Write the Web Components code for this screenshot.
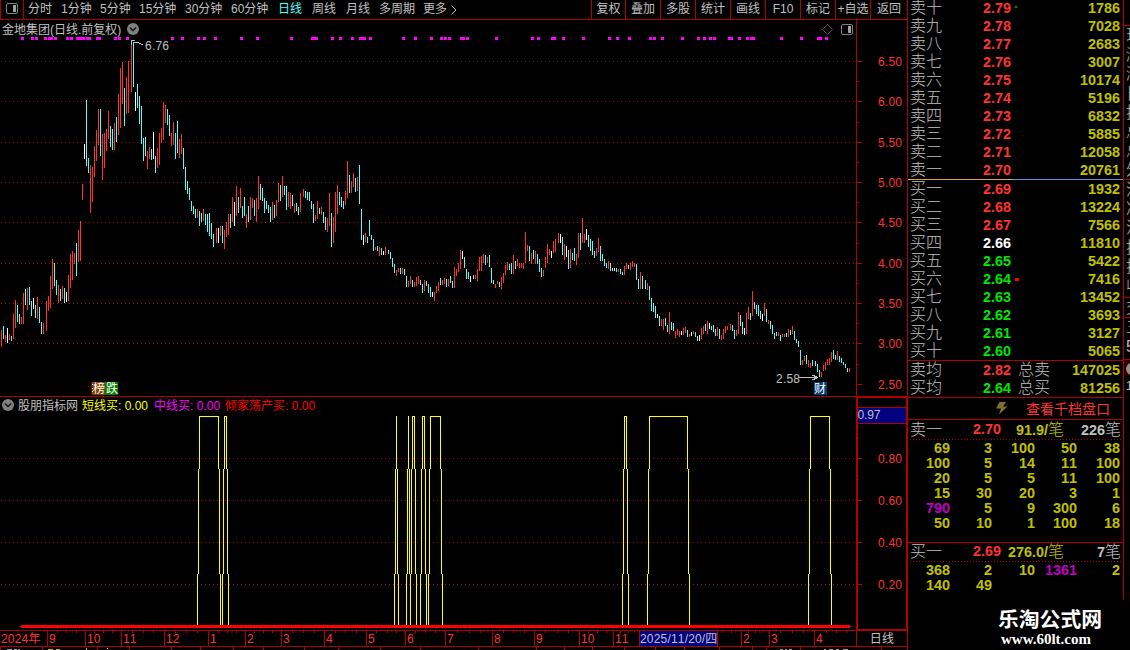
<!DOCTYPE html>
<html lang="zh-CN">
<head>
<meta charset="utf-8">
<title>金地集团 日线</title>
<style>
  :root {
    --line: #b00000;
    --grey: #c0c0c0;
    --up: #ff3232;
    --down: #54fcfc;
    --volume: #c0c000;
  }
  body {
    margin: 0;
    width: 1130px;
    height: 650px;
    overflow: hidden;
    background: #000;
    color: var(--grey);
    font: 12px/14px "Liberation Sans", "Noto Sans CJK SC", sans-serif;
    font-kerning: none;
  }
</style>
</head>
<body>
<trade-screen>
  <tool-bar slot="chart"></tool-bar>
  <price-chart slot="chart"></price-chart>
  <indicator-chart slot="chart">股朋指标网</indicator-chart>
  <time-axis slot="chart"></time-axis>
  <order-book slot="book"></order-book>
  <side-strip slot="side"></side-strip>
</trade-screen>

<script>
// shared helpers for the drawn parts
const rect = (x, y, w, h, fill) => `<rect x="${x}" y="${y}" width="${w}" height="${h}" fill="${fill}"/>`;
const LINE = '#b00000';

const gridRow = (y, width) =>
  `<line x1="1" x2="${width}" y1="${y + 0.5}" y2="${y + 0.5}" stroke="#980a0a" stroke-dasharray="1 3"/>`;

const chevronIcon = `
  <svg class="chevron" width="12" height="12" viewBox="0 0 12 12">
    <circle cx="6" cy="6" r="6" fill="#808080"/>
    <path d="M2.8 4.6 6 7.6 9.2 4.6" fill="none" stroke="#111" stroke-width="1.4"/>
  </svg>`;

const panelIcon = `
  <svg width="12" height="11" viewBox="0 0 12 11">
    <rect x=".5" y=".5" width="11" height="10" rx="1.5" fill="none" stroke="#808080"/>
    <rect x="7" y="2" width="3" height="7" fill="#a0a0a0"/>
  </svg>`;

class TradeScreen extends HTMLElement {
  constructor() {
    super();
    this.attachShadow({mode: 'open'}).innerHTML = `
      <style>
        :host { display: grid; grid-template-columns: 907px 217px 6px; height: 650px; }
        .charts { display: flex; flex-direction: column; overflow: hidden; }
        .book { border-left: 1px solid var(--line); overflow: hidden; }
        .side { overflow: hidden; }
      </style>
      <div class="charts"><slot name="chart"></slot></div>
      <div class="book"><slot name="book"></slot></div>
      <div class="side"><slot name="side"></slot></div>
    `;
  }
}

class ToolBar extends HTMLElement {
  constructor() {
    super();
    const periods = ['分时', '1分钟', '5分钟', '15分钟', '30分钟', '60分钟', '日线', '周线', '月线', '多周期', '更多'];
    const actions = ['复权', '叠加', '多股', '统计', '画线', 'F10', '标记', '+自选', '返回'];
    this.attachShadow({mode: 'open'}).innerHTML = `
      <style>
        :host { display: flex; height: 19px; line-height: 19px; border-bottom: 1px solid var(--line); white-space: nowrap; }
        .toggle { width: 22px; border: 1px solid var(--line); border-width: 0 1px; display: flex; align-items: flex-start; justify-content: center; padding-top: 3px; box-sizing: content-box; height: 16px; }
        .periods { display: grid; grid-template-columns: 33px 39px 39px 46px 46px 47px 34px 34px 33px 44px 38px; padding-left: 4px; flex: 1; }
        .active { color: var(--down); }
        .periods span:last-child { display: flex; align-items: center; gap: 4px; height: 19px; }
        .actions { display: grid; grid-template-columns: 34px repeat(7, 35px) 37px; width: 316px; }
        .actions span { border-left: 1px solid var(--line); text-align: center; height: 19px; }
      </style>
      <div class="toggle">${panelIcon}</div>
      <div class="periods">
        ${periods.map(p => `<span class="${p === '日线' ? 'active' : ''}">${p}${p === '更多'
          ? '<svg width="6" height="10" viewBox="0 0 6 10"><path d="M.5.5 5 5 .5 9.5" fill="none" stroke="#c0c0c0"/></svg>' : ''}</span>`).join('')}
      </div>
      <div class="actions">${actions.map(a => `<span>${a}</span>`).join('')}</div>
    `;
  }
}

// daily bars: [x of the first bar, bars 2px apart]; colour letter, high and low
const BARS = [
  [1, 'r330-347 c326-339 r335-342 w328-343 r334-340 c336-341 r314-339 r300-328 c305-322 c314-324 r317-324 r293-324 c289-305 r288-310 c287-305 c301-316 w298-309 c305-318 r297-319 c307-323 c322-334 r323-334'],
  [46, 'r301-331 r296-311 r276-308 r259-289 c263-286 c280-295 r285-303 c289-301 r286-299 c288-303 w292-302 r275-301 r254-288 r251-280 r253-264 c243-276 r230-262 r221-261 r184-200 w144-159 c100-166 c158-173 r165-213 r167-202 r146-177 r130-161 r109-145 c109-156 r134-180 r133-168 r129-151 r111-139 c126-147 c129-150 r123-150 c117-142 r94-135 r68-128 r62-104 c88-126 r77-114 r61-113'],
  [131, 'r42-92 c42-87 w92-111 c84-108 c96-124 c106-144 c138-161 c137-156 r151-169 r147-159 c149-160 w132-159 c156-173 r148-168 r133-165 r128-143 r102-140 r105-123 c109-125 c115-136 r133-146 r122-145 c133-159 c121-153 r139-158 r134-154 c148-169 c167-190 c181-194 c188-200 c201-211 c206-214 c209-218 r209-218 c211-226 c213-222 r209-221 c214-225 c214-232 c213-236 c223-239 c234-247'],
  [216, 'r228-243 w228-243 r226-236 c226-243 r230-249 r222-237 r214-235 c214-228 r197-222 w202-226 r186-216 c197-213 r188-208 c206-218 c197-216 r214-228 c206-222 r197-220 r198-208 c200-216 r198-222 r176-209 c184-200 c188-201 c198-213 c201-209 c205-213 c207-222 r202-220 c205-218 r200-216 r183-202 c185-201 r176-197 c186-195 c186-210 r192-207 r193-209 c195-206 r204-213 c203-211 c207-215 r193-212'],
  [303, 'r189-197 c191-198 c192-200 c192-201 c201-209 c204-223 r215-221 r201-219 c208-214 r207-215 c212-223 c217-230 r218-232 r193-226 c213-247 r217-243 r192-232 r185-214 c192-205 c197-207 c201-209 r191-205 r161-198 c175-193 r181-193 r173-187 c178-192 r177-191 c165-204 c209-240 w235-245 r233-242 c237-243 c220-236 c235-240 c239-251 r247-250 c246-251 r247-256 c248-255 w251-255 r247-255'],
  [388, 'c250-254 c252-259 c258-267 c264-273 r270-276 r268-272 c268-274 r268-274 c269-275 c276-287 r281-287 r276-284 c280-287 r282-287 r277-286 r276-284 c280-285 c284-293 r280-291 c281-286 c284-293 c287-297 w292-297 r292-301 r286-293 r282-291 c278-285 r280-285 r278-284 c279-287 r279-286 c276-283 c281-288 r267-288 r269-276 r263-272 r250-269 w251-259 c257-268 c269-279 c272-279 w276-282'],
  [473, 'c275-279 r275-279 r269-281 r257-271 r256-271 r254-263 c255-265 r257-263 c255-267 c268-283 c280-284 r284-288 r281-284 c282-287 r277-289 r273-283 r265-275 r262-270 c264-270 c263-274 r255-274 c261-269 r259-266 r263-268 r263-268 r263-269 r232-263 r245-251 c246-261 r253-264 c250-259 r251-264 c254-264 c259-272 c268-277 r270-276 r257-268 r244-263 r249-255 w251-258 r241-253 r239-252'],
  [558, 'r233-243 w234-243 c237-255 r244-260 w246-257 c250-269 r249-268 c253-260 c248-261 r254-265 r233-258 c233-250 r218-243 r234-243 w229-240 c235-247 c239-251 c241-255 c251-258 r248-256 r238-252 c246-261 c254-261 c259-266 c263-268 r261-269 c263-271 c268-271 w268-271 c268-272 r269-272 c269-274 c272-275 r266-275 r263-269 c265-269 r263-270 r261-267 r263-267 c264-280 c279-289 r272-289 c276-289'],
  [645, 'c280-289 r283-290 c286-300 c298-311 c303-312 c306-318 w314-318 c316-326 r319-326 r319-330 c318-326 c325-332 r312-334 c322-330 c323-331 r331-338 r329-335 r331-337 w331-335 r328-335 r327-333 c330-337 r334-337 w332-336 r331-334 c332-337 c336-341 w335-341 r328-339 r326-334 c324-331 r321-334 w323-329 c326-330 c325-332 c329-336 r327-336 c329-339 r335-340 r329-339 r326-333 r326-330'],
  [730, 'r324-330 c325-331 c330-339 r330-336 r312-334 c315-326 c322-334 w328-335 r313-334 r307-319 c313-320 r291-316 c302-309 c305-314 c305-316 c311-319 w314-321 r303-316 c309-322 r320-324 c321-329 c325-334 c333-339 c332-336 r332-336 c335-341 r334-337 r334-337 c333-337 r329-337 c330-335 r326-334 c331-340 c339-343 c341-347 c350-365 r360-365 r356-361 c355-364 r360-367 r363-368 c360-366'],
  [815, 'c361-366 c364-372 c370-377 r372-377 r365-371 r362-370 r359-365 r358-365 r352-362 c350-359 c355-360 r351-360 c356-362 c358-363 c362-365 c364-368 c368-372 r368-372'],
];
const BAR_COLORS = {r: '#ff3232', c: '#54fcfc', w: '#ffffff'};

// signal marks along the top, [x, width] or x for the usual 3px
const MARKS = [21, 31, 35, 44, [48, 5], 54, 66, 70, [76, 9], [86, 5], [96, 5], 114, 118, 126, 171, 181, 197, 203, 214,
  240, 256, 290, [311, 7], 331, 339, 351, [359, 7], 369, 402, 414, 430, 440, 444, 448, [460, 5], 466, 495, 531, 537,
  [551, 5], 562, 582, 608, 616, 628, 649, 653, 661, 681, 697, 703, 709, 713, [728, 5], 738, 746, [750, 5], 780, 800,
  [817, 5], 825];

class PriceChart extends HTMLElement {
  constructor() {
    super();
    const ticks = [['6.50', 61], ['6.00', 101], ['5.50', 142], ['5.00', 182], ['4.50', 222], ['4.00', 263],
      ['3.50', 303], ['3.00', 343], ['2.50', 384]];
    const bars = BARS.map(([start, list]) => list.split(' ').map((bar, i) => {
      const [high, low] = bar.slice(1).split('-').map(Number);
      return rect(start + i * 2, high, 1, low - high, BAR_COLORS[bar[0]]);
    }).join('')).join('');
    this.attachShadow({mode: 'open'}).innerHTML = `
      <style>
        :host { display: block; position: relative; height: 376px; border-bottom: 1px solid var(--line); }
        svg { display: block; }
        text { font-size: 12px; fill: var(--grey); }
        .axis text { fill: var(--up); }
        header { position: absolute; left: 2px; right: 54px; top: 2px; display: flex; align-items: center; height: 14px; gap: 6px; }
        header > span:first-child { padding-top: 1px; }
        header .right { margin-left: auto; display: flex; gap: 8px; }
        .tag { fill: #fff; }
      </style>
      <svg width="907" height="376" viewBox="0 20 907 376" shape-rendering="crispEdges">
        ${ticks.slice(0, -1).map(([, y]) => gridRow(y, 855)).join('')}
        ${MARKS.map(m => Array.isArray(m) ? rect(m[0], 37, m[1], 3, '#f0f') : rect(m, 37, 3, 3, '#f0f')).join('')}
        ${bars}
        <path d="M131.500 45V40.500H135M133 42.500H136M136 42.500H139M139 43.500H141M141 44.500H143" fill="none" stroke="#c0c0c0"/>
        <text x="145" y="50" textLength="24">6.76</text>
        <text x="776" y="383" textLength="24">2.58</text>
        <path d="M799 377.500H818M812 375.500H815M812 379.500H815M814 376.500H817M814 378.500H817" fill="none" stroke="#c0c0c0"/>
        ${rect(91, 382, 2, 12, '#800000')}${rect(92, 382, 13, 13, '#804000')}${rect(105, 382, 13, 13, '#008000')}
        ${rect(92, 384, 1, 1, '#fff')}${rect(92, 388, 1, 1, '#fff')}${rect(92, 391, 1, 1, '#fff')}
        <text class="tag" x="93" y="393">榜</text><text class="tag" x="106" y="393">跌</text>
        ${rect(814, 382, 13, 13, '#003c78')}
        <text class="tag" x="814" y="393">财</text>
        <g class="axis">
          ${rect(856, 20, 1, 376, LINE)}
          ${ticks.map(([label, y]) => rect(857, y, 5, 1, LINE) + `<text x="878" y="${y + 5}" textLength="24">${label}</text>`).join('')}
          ${[81, 122, 162, 202, 243, 283, 323, 364].map(y => rect(857, y, 2, 1, LINE)).join('')}
        </g>
      </svg>
      <header>
        <span>金地集团(日线.前复权)</span>${chevronIcon}
        <span class="right">
          <svg width="11" height="11" viewBox="0 0 11 11"><path d="M5.500.5l5 5-5 5-5-5z" fill="none" stroke="#808080" stroke-dasharray="1.200 .6"/></svg>
          ${panelIcon}
        </span>
      </header>
    `;
  }
}

class IndicatorChart extends HTMLElement {
  constructor() {
    super();
    // where the signal is 1: first and last column of each plateau
    const pulses = [[199, 218], [224, 226], [396, 396], [408, 408], [412, 414], [422, 424], [430, 440], [624, 626],
      [649, 687], [810, 829]];
    const steps = [[416, 469], [469, 574], [574, 625]];
    const ticks = [['0.80', 458], ['0.60', 500], ['0.40', 542], ['0.20', 584]];
    this.attachShadow({mode: 'open'}).innerHTML = `
      <style>
        :host { display: block; position: relative; height: 233px; }
        svg { display: block; }
        text { font-size: 12px; fill: var(--up); }
        header { position: absolute; left: 2px; top: 1px; display: flex; align-items: center; gap: 6px; height: 14px; }
        header span { padding-top: 1px; }
        .name { margin-left: -2px; margin-right: -2px; }
        .short { color: #ff0; }
        .mid { color: #f0f; }
        .all { color: #f00; margin-left: -1px; }
      </style>
      <svg width="907" height="233" viewBox="0 397 907 233" shape-rendering="crispEdges">
        ${ticks.map(([, y]) => gridRow(y, 855)).join('')}
        ${pulses.map(([a, b]) => rect(a, 416, b - a + 1, 1, '#ff0')
          + steps.map(([y, end], i) => rect(a - i, y, 1, end - y, '#ff0') + rect(b + i, y, 1, end - y, '#ff0')).join('')).join('')}
        ${rect(21, 625, 829, 3, '#f00')}${rect(20, 626, 831, 1, '#f00')}
        ${rect(856, 397, 2, 233, LINE)}${rect(856, 397, 51, 1, LINE)}${rect(906, 397, 1, 233, LINE)}${rect(856, 629, 51, 1, LINE)}
        ${rect(858, 407, 48, 17, LINE)}${rect(858, 408, 48, 15, '#000080')}
        <text x="857.5" y="419" textLength="23" style="fill: var(--grey)">0.97</text>
        ${ticks.map(([label, y]) => rect(858, y, 4, 1, LINE) + `<text x="878" y="${y + 5}" textLength="24">${label}</text>`).join('')}
        ${[437, 479, 521, 563].map(y => rect(858, y, 1, 1, LINE)).join('')}
      </svg>
      <header>
        ${chevronIcon}<span class="name"><slot></slot></span>
        <span class="short">短线买: 0.00</span>
        <span class="mid">中线买: 0.00</span>
        <span class="all">倾家荡产买: 0.00</span>
      </header>
    `;
  }
}

class TimeAxis extends HTMLElement {
  constructor() {
    super();
    const months = [['2024年', 0], ['9', 47], ['10', 85], ['11', 121], ['12', 164], ['1', 208], ['2', 245], ['3', 281],
      ['4', 324], ['5', 366], ['6', 405], ['7', 445], ['8', 492], ['9', 534], ['10', 579], ['11', 613],
      ['2025/11/20/四', 639], ['', 717], ['2', 741], ['3', 769], ['4', 814], ['日线', 856]];
    const widths = months.map(([, x], i) => (i + 1 < months.length ? months[i + 1][1] : 907) - x);
    const weeks = [57, 66, 76, 94, 103, 112, 132, 143, 153, 175, 186, 197, 218, 227, 236, 254, 263, 272, 292, 303, 314,
      335, 345, 356, 376, 387, 396, 415, 425, 435, 457, 469, 480, 503, 513, 524, 545, 557, 568, 588, 597, 606, 620,
      628, 634, 722, 731, 748, 755, 762, 780, 792, 803, 826, 836, 846];
    const below = [0, 42, 97, 129, 171, 200, 233, 263, 304, 338, 380, 420, 478, 536, 564, 592, 624, 655, 684, 719, 752,
      766, 800, 881];
    // tops of the status line that runs off the bottom of the window
    const specks = [[7, 5], [14, 3], [18, 2], [780, 3], [785, 2], [789, 3], [824, 2], [829, 4], [836, 3], [843, 5]];
    this.attachShadow({mode: 'open'}).innerHTML = `
      <style>
        :host { display: block; height: 20px; position: relative; color: var(--up); }
        .row { display: grid; grid-template-columns: ${widths.map(w => w + 'px').join(' ')}; height: 15px; border: 1px solid var(--line); border-width: 1px 0; }
        .row span { border-left: 1px solid var(--line); padding-left: 1px; line-height: 16px; height: 15px; white-space: nowrap; letter-spacing: .2px; }
        .row span:first-child { border: 0; padding-left: 1px; }
        .row .now { background: #000080; color: var(--grey); letter-spacing: .18px; padding: 0; }
        .row span:last-child { color: var(--grey); padding: 0; text-align: center; }
        svg { position: absolute; left: 0; top: 0; }
      </style>
      <div class="row">${months.map(([m]) => `<span class="${m.length > 8 ? 'now' : ''}">${m}</span>`).join('')}</div>
      <svg width="907" height="20" shape-rendering="crispEdges">
        ${weeks.map(x => rect(x, 1, 1, 2, LINE)).join('')}
        ${below.map(x => rect(x, 17, 1, 3, LINE)).join('')}
        ${specks.map(([x, w]) => rect(x, 19, w, 1, '#a0a0a0')).join('')}
        ${rect(48, 19, 5, 1, '#c0c000')}${rect(56, 19, 4, 1, '#c0c000')}${rect(86, 18, 1, 2, '#c0c000')}${rect(107, 18, 1, 1, '#fff')}
      </svg>
    `;
  }
}

// one price level of the book
class BookLevel extends HTMLElement {
  constructor() {
    super();
    const total = this.getAttribute('total') || '';
    this.attachShadow({mode: 'open'}).innerHTML = `
      <style>
        :host { display: grid; grid-template-columns: 73px 35px 40px 1fr; height: 18px; line-height: 18px; padding: 0 3px 0 2px; font-size: 16px; font-weight: 300; }
        b { font-size: 14.4px; font-weight: 700; }
        .price { color: var(--price); position: relative; }
        .volume { color: var(--volume); text-align: right; }
        :host([mark="up"]) .price::after, :host([mark="here"]) .price::after {
          content: ""; position: absolute; left: 31px; top: 6px;
          border: 2px solid transparent; border-top: 0; border-bottom: 3px solid #008000;
        }
        :host([mark="here"]) .price::after { border: 0; background: #f00; width: 4px; height: 3px; left: 32px; top: 8px; }
      </style>
      <span>${this.getAttribute('label')}</span>
      <b class="price">${this.getAttribute('price')}</b>
      <span>${total}</span>
      <b class="volume">${this.getAttribute('volume')}</b>
    `;
  }
}

// single orders queued at the best price
class OrderQueue extends HTMLElement {
  constructor() {
    super();
    const cells = this.getAttribute('orders').split(' ')
      .map(n => `<b class="${n > 500 ? 'big' : ''}">${n}</b>`).join('');
    this.attachShadow({mode: 'open'}).innerHTML = `
      <style>
        :host { display: block; font-size: 16px; font-weight: 300; }
        .head { display: grid; grid-template-columns: 63px 28px 63px 1fr; height: 19px; line-height: 19px; padding: 0 2px; text-align: right; white-space: nowrap; }
        :host([label="买一"]) .head { height: 18px; line-height: 17px; }
        .head span:first-child { text-align: left; }
        b { font-size: 14.4px; font-weight: 700; }
        .price { color: var(--up); }
        .avg { color: var(--volume); }
        .rule { height: 1px; margin: 0 2px; background: repeating-linear-gradient(90deg, #b00000 0 1px, transparent 1px 3px); }
        .cells { display: grid; grid-template-columns: 42px 42px 43px 42px 43px; grid-auto-rows: 15px; line-height: 15px; text-align: right; padding-top: 1px; }
        .cells b { color: var(--volume); }
        .cells .big { color: #c000c0; }
      </style>
      <div class="head">
        <span>${this.getAttribute('label')}</span>
        <b class="price">${this.getAttribute('price')}</b>
        <span class="avg"><b>${this.getAttribute('avg')}/</b>笔</span>
        <span><b>${this.getAttribute('count')}</b>笔</span>
      </div>
      <div class="rule"></div>
      <div class="cells">${cells}</div>
    `;
  }
}

class OrderBook extends HTMLElement {
  constructor() {
    super();
    const digits = ['一', '二', '三', '四', '五', '六', '七', '八', '九', '十'];
    const asks = [1786, 7028, 2683, 3007, 10174, 5196, 6832, 5885, 12058, 20761];
    const bids = [1932, 13224, 7566, 11810, 5422, 7416, 13452, 3693, 3127, 5065];
    const level = (label, cents, volume, extra = '') => {
      const color = cents > 266 ? '#ff3232' : cents < 266 ? '#00e600' : '#fff';
      return `<book-level label="${label}" price="${(cents / 100).toFixed(2)}" volume="${volume}" ${extra} style="--price: ${color}"></book-level>`;
    };
    this.attachShadow({mode: 'open'}).innerHTML = `
      <style>
        :host { display: block; }
        .box { box-sizing: border-box; height: 600px; border-right: 1px solid var(--line); overflow: hidden; }
        .asks { margin-top: -1px; }
        .mid { height: 1px; background: linear-gradient(90deg, #e0a050 0 105px, #5090e0 105px); }
        .line { height: 1px; background: var(--line); }
        .more { display: flex; align-items: center; height: 21px; padding: 0 13px 0 88px; justify-content: space-between; color: var(--up); font-size: 14px; }
        .sell { height: 122px; }
        footer { display: flex; flex-direction: column; align-items: flex-start; padding: 7px 0 0 90px; color: #fff; font-weight: 700; white-space: nowrap; }
        .site { font-size: 20.8px; line-height: 25px; }
        .url { font: 700 15px/14px "Liberation Serif", serif; padding-left: 3px; }
      </style>
      <div class="box">
        <div class="asks">${asks.map((v, i) => level('卖' + digits[9 - i], 279 - i, v, i === 0 ? 'mark="up"' : '')).join('')}</div>
        <div class="mid"></div>
        <div>${bids.map((v, i) => level('买' + digits[i], 269 - i, v, i === 5 ? 'mark="here"' : '')).join('')}</div>
        <div class="line"></div>
        ${level('卖均', 282, 147025, 'total="总卖"')}
        ${level('买均', 264, 81256, 'total="总买"')}
        <div class="line"></div>
        <div class="more">
          <svg width="12" height="13" viewBox="0 0 12 13"><path d="M3.500 0h6.500L7 4.500h4.500L3 12.500 5 6.500H0z" fill="#80702c"/></svg>
          <span>查看千档盘口</span>
        </div>
        <div class="line"></div>
        <order-queue class="sell" label="卖一" price="2.70" avg="91.9" count="226"
          orders="69 3 100 50 38 100 5 14 11 100 20 5 5 11 100 15 30 20 3 1 790 5 9 300 6 50 10 1 100 18"></order-queue>
        <div class="line"></div>
        <order-queue label="买一" price="2.69" avg="276.0" count="7" orders="368 2 10 1361 2 140 49"></order-queue>
      </div>
      <footer><span class="site">乐淘公式网</span><span class="url">www.60lt.com</span></footer>
    `;
  }
}

// left edge of the quote panel, cut off by the window
class SideStrip extends HTMLElement {
  constructor() {
    super();
    this.attachShadow({mode: 'open'}).innerHTML = `
      <style>
        :host { display: block; width: 6px; overflow: hidden; font-size: 16px; font-weight: 300; }
        div { box-sizing: border-box; padding-left: 2px; overflow: hidden; }
        .list { border-top: 1px solid var(--line); line-height: 19.2px; }
        .list span { display: block; width: 16px; }
        .icon { background: #300000; padding: 3px 0 0 2px; height: 17px; border-top: 1px solid var(--line); }
        i { display: block; width: 12px; height: 12px; border-radius: 50%; background: #909090; }
      </style>
      <div style="height: 25px"></div>
      <div class="list" style="height: 154px"><span>现</span><span>涨</span><span>涨</span><span>日</span><span>换</span><span>总</span><span>总</span><span>外</span></div>
      <div class="list" style="height: 118px"><span>流</span><span>净</span><span>流</span><span>换</span><span>换</span><span>收</span></div>
      <div class="list" style="height: 20px"><span>交</span></div>
      <div class="list" style="height: 42px"><span>三</span><span><b>5</b></span></div>
      <div class="icon"><i></i></div>
      <div style="font-size: 12px; line-height: 20px">1</div>
    `;
  }
}

customElements.define('trade-screen', TradeScreen);
customElements.define('tool-bar', ToolBar);
customElements.define('price-chart', PriceChart);
customElements.define('indicator-chart', IndicatorChart);
customElements.define('time-axis', TimeAxis);
customElements.define('book-level', BookLevel);
customElements.define('order-queue', OrderQueue);
customElements.define('order-book', OrderBook);
customElements.define('side-strip', SideStrip);
</script>
</body>
</html>
